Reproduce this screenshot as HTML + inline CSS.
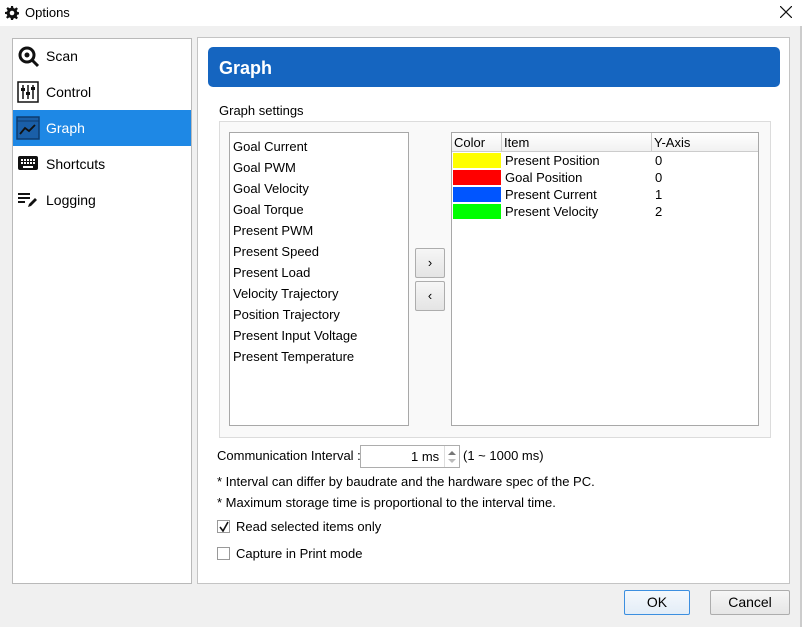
<!DOCTYPE html>
<html><head><style>
*{margin:0;padding:0;box-sizing:border-box}
body{width:802px;height:627px;background:#f0f0f0;font-family:"Liberation Sans",sans-serif;font-size:13px;color:#000;position:relative;overflow:hidden}
.a{position:absolute}
.t{position:absolute;white-space:nowrap;line-height:16px}
</style></head><body>
<div class="a" style="left:0;top:0;width:802px;height:26px;background:#fff"></div>
<svg class="a" style="left:5px;top:6px" width="14" height="14" viewBox="0 0 14 14"><path d="M6 0h2l.4 2 1.4.6 1.7-1.2 1.4 1.4-1.2 1.7.6 1.4 2 .4v2l-2 .4-.6 1.4 1.2 1.7-1.4 1.4-1.7-1.2-1.4.6L8 14H6l-.4-2-1.4-.6-1.7 1.2-1.4-1.4 1.2-1.7-.6-1.4L0 8V6l2-.4.6-1.4-1.2-1.7 1.4-1.4 1.7 1.2 1.4-.6z" fill="#111"/><circle cx="7" cy="7" r="2.3" fill="#fff"/></svg>
<div class="t" style="left:25px;top:5px;font-size:13px">Options</div>
<svg class="a" style="left:780px;top:6px" width="12" height="12"><path d="M0 0L12 12M12 0L0 12" stroke="#111" stroke-width="1.2"/></svg>
<div class="a" style="left:800px;top:26px;width:2px;height:601px;background:#ccc"></div>

<!-- left panel -->
<div class="a" style="left:12px;top:38px;width:180px;height:546px;background:#fff;border:1px solid #b9b9b9"></div>
<div class="a" style="left:13px;top:110px;width:178px;height:36px;background:#1e88e5"></div>
<svg class="a" style="left:17px;top:45px" width="24" height="24" viewBox="0 0 24 24"><circle cx="10" cy="10" r="7" fill="none" stroke="#111" stroke-width="3"/><circle cx="10" cy="10" r="2.5" fill="#111"/><path d="M15 15l6 6" stroke="#111" stroke-width="3"/></svg>
<div class="t" style="left:46px;top:48px;font-size:14px">Scan</div>
<svg class="a" style="left:17px;top:81px" width="22" height="22" viewBox="0 0 22 22"><rect x="1" y="1" width="20" height="20" fill="none" stroke="#111" stroke-width="1.5"/><path d="M6 4v14M11 4v14M16 4v14" stroke="#111" stroke-width="1.5"/><rect x="4" y="7" width="4" height="3" fill="#111"/><rect x="9" y="11" width="4" height="3" fill="#111"/><rect x="14" y="6" width="4" height="3" fill="#111"/></svg>
<div class="t" style="left:46px;top:84px;font-size:14px">Control</div>
<svg class="a" style="left:16px;top:116px" width="24" height="24" viewBox="0 0 24 24"><rect x="1" y="1" width="22" height="22" fill="#1a5fa8" stroke="#0d3b6e" stroke-width="1.5"/><path d="M1 5h22" stroke="#0d3b6e"/><path d="M4 18l5-6 4 3 6-6" fill="none" stroke="#111" stroke-width="1.8"/></svg>
<div class="t" style="left:46px;top:120px;font-size:14px;color:#fff">Graph</div>
<svg class="a" style="left:18px;top:156px" width="20" height="14" viewBox="0 0 20 14"><rect width="20" height="14" rx="2" fill="#111"/><g fill="#fff"><rect x="3" y="3" width="2" height="2"/><rect x="6" y="3" width="2" height="2"/><rect x="9" y="3" width="2" height="2"/><rect x="12" y="3" width="2" height="2"/><rect x="15" y="3" width="2" height="2"/><rect x="3" y="6" width="2" height="2"/><rect x="6" y="6" width="2" height="2"/><rect x="9" y="6" width="2" height="2"/><rect x="12" y="6" width="2" height="2"/><rect x="15" y="6" width="2" height="2"/><rect x="5" y="10" width="10" height="2"/></g></svg>
<div class="t" style="left:46px;top:156px;font-size:14px">Shortcuts</div>
<svg class="a" style="left:18px;top:192px" width="20" height="16" viewBox="0 0 20 16"><path d="M0 2h12M0 6h12M0 10h7" stroke="#111" stroke-width="2"/><path d="M10 15l1-3 6-6 2 2-6 6z" fill="#111"/></svg>
<div class="t" style="left:46px;top:192px;font-size:14px">Logging</div>

<!-- right panel -->
<div class="a" style="left:197px;top:37px;width:593px;height:547px;background:#fff;border:1px solid #c4c4c4"></div>
<div class="a" style="left:208px;top:47px;width:572px;height:40px;background:#1565c0;border-radius:5px"></div>
<div class="t" style="left:219px;top:58px;font-size:18px;font-weight:bold;color:#fff;line-height:20px">Graph</div>
<div class="t" style="left:219px;top:103px">Graph settings</div>
<div class="a" style="left:219px;top:121px;width:552px;height:317px;background:#f9f9f9;border:1px solid #dcdcdc"></div>
<div class="a" style="left:229px;top:132px;width:180px;height:294px;background:#fff;border:1px solid #a8a8a8"></div>
<div class="t" style="left:233px;top:136px;line-height:21px">Goal Current<br>Goal PWM<br>Goal Velocity<br>Goal Torque<br>Present PWM<br>Present Speed<br>Present Load<br>Velocity Trajectory<br>Position Trajectory<br>Present Input Voltage<br>Present Temperature</div>
<div class="a" style="left:415px;top:248px;width:30px;height:30px;background:linear-gradient(#f6f6f6,#e4e4e4);border:1px solid #adadad;border-radius:2px;text-align:center;line-height:27px;font-size:13px">›</div>
<div class="a" style="left:415px;top:281px;width:30px;height:30px;background:linear-gradient(#f6f6f6,#e4e4e4);border:1px solid #adadad;border-radius:2px;text-align:center;line-height:27px;font-size:13px">‹</div>
<div class="a" style="left:451px;top:132px;width:308px;height:294px;background:#fff;border:1px solid #a8a8a8"></div>
<div class="a" style="left:452px;top:133px;width:306px;height:19px;background:linear-gradient(#fff,#f1f1f1);border-bottom:1px solid #ccc"></div>
<div class="a" style="left:501px;top:133px;width:1px;height:19px;background:#ccc"></div>
<div class="a" style="left:651px;top:133px;width:1px;height:19px;background:#ccc"></div>
<div class="t" style="left:454px;top:135px">Color</div>
<div class="t" style="left:504px;top:135px">Item</div>
<div class="t" style="left:654px;top:135px">Y-Axis</div>
<div class="a" style="left:453px;top:153px;width:48px;height:15px;background:#ff0"></div>
<div class="a" style="left:453px;top:170px;width:48px;height:15px;background:#f00"></div>
<div class="a" style="left:453px;top:187px;width:48px;height:15px;background:#0055ff"></div>
<div class="a" style="left:453px;top:204px;width:48px;height:15px;background:#0f0"></div>
<div class="t" style="left:505px;top:152px;line-height:17px">Present Position<br>Goal Position<br>Present Current<br>Present Velocity</div>
<div class="t" style="left:655px;top:152px;line-height:17px">0<br>0<br>1<br>2</div>

<div class="t" style="left:217px;top:448px">Communication Interval :</div>
<div class="a" style="left:360px;top:445px;width:100px;height:23px;background:#fff;border:1px solid #adadad"></div>
<div class="t" style="left:411px;top:449px">1 ms</div>
<div class="a" style="left:444px;top:446px;width:1px;height:21px;background:#ddd"></div>
<svg class="a" style="left:447px;top:449px" width="10" height="16"><path d="M1 6l4-4 4 4z" fill="#777"/><path d="M1 10l4 4 4-4z" fill="#bbb"/></svg>
<div class="t" style="left:463px;top:448px">(1 ~ 1000 ms)</div>
<div class="t" style="left:217px;top:474px">* Interval can differ by baudrate and the hardware spec of the PC.</div>
<div class="t" style="left:217px;top:495px">* Maximum storage time is proportional to the interval time.</div>
<div class="a" style="left:217px;top:520px;width:13px;height:13px;background:#fff;border:1px solid #999"></div>
<svg class="a" style="left:219px;top:521px" width="10" height="11"><path d="M1 6l3 4 5-9" fill="none" stroke="#111" stroke-width="1.6"/></svg>
<div class="t" style="left:236px;top:519px">Read selected items only</div>
<div class="a" style="left:217px;top:547px;width:13px;height:13px;background:#fff;border:1px solid #999"></div>
<div class="t" style="left:236px;top:546px">Capture in Print mode</div>

<div class="a" style="left:624px;top:590px;width:66px;height:25px;background:linear-gradient(#f4f8fc,#e3edf7);border:1px solid #3c8fe0;border-radius:2px;text-align:center;line-height:23px;font-size:14px">OK</div>
<div class="a" style="left:710px;top:590px;width:80px;height:25px;background:linear-gradient(#f6f6f6,#e6e6e6);border:1px solid #adadad;border-radius:2px;text-align:center;line-height:23px;font-size:14px">Cancel</div>
</body></html>
